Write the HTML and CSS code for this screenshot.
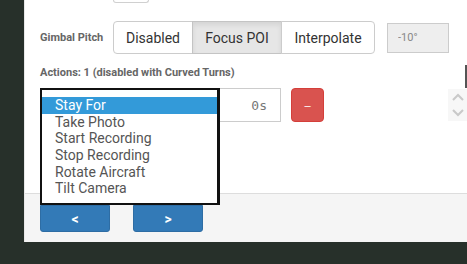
FILE: index.html
```html
<!DOCTYPE html>
<html lang="en">
<head>
    <meta charset="UTF-8">
    <title>Waypoint Settings</title>
    <link rel="stylesheet" href="styles.css">
</head>
<body>
    <div class="panel">
        <div class="content">
            <div class="prev-input"></div>

            <div class="form-row">
                <label class="field-label">Gimbal Pitch</label>
                <div class="btn-group">
                    <button class="seg">Disabled</button>
                    <button class="seg active">Focus POI</button>
                    <button class="seg">Interpolate</button>
                </div>
                <input class="pitch-input" type="text" value="-10°" disabled>
            </div>

            <div class="actions-row">
                <span class="field-label">Actions: 1 (disabled with Curved Turns)</span>
                <span class="edge-line"></span>
            </div>

            <div class="action-row">
                <div class="select-wrap">
                    <div class="select-closed"></div>
                    <ul class="listbox">
                        <li class="selected">Stay For</li>
                        <li>Take Photo</li>
                        <li>Start Recording</li>
                        <li>Stop Recording</li>
                        <li>Rotate Aircraft</li>
                        <li>Tilt Camera</li>
                    </ul>
                </div>
                <input class="time-input" type="text" value="0s">
                <button class="btn-remove">&ndash;</button>
                <div class="spinner">
                    <svg width="14" height="10" viewBox="0 0 14 10"><path d="M2 8 L7 3 L12 8" fill="none" stroke="#c9c9c9" stroke-width="2"/></svg>
                    <svg width="14" height="10" viewBox="0 0 14 10"><path d="M2 2 L7 7 L12 2" fill="none" stroke="#c9c9c9" stroke-width="2"/></svg>
                </div>
            </div>
        </div>

        <div class="footer">
            <button class="btn-nav">&lt;</button>
            <button class="btn-nav">&gt;</button>
        </div>
    </div>
</body>
</html>
```

FILE: styles.css
```css
body {
    margin: 0;
    padding: 0;
    background-color: #27302a;
    font-family: 'Roboto', 'Liberation Sans', sans-serif;
    width: 467px;
    height: 264px;
    overflow: hidden;
}
.panel {
    margin-left: 24px;
    width: 443px;
    background: #fff;
    border-left: 1px solid #e8e8e8;
    box-sizing: border-box;
}
.content {
    height: 193px;
    padding-left: 15px;
    box-sizing: border-box;
}
.prev-input {
    margin-left: 73px;
    width: 34px;
    height: 2px;
    border: 1px solid #d0d0d0;
    border-top: none;
    border-radius: 0 0 4px 4px;
}
.form-row {
    display: flex;
    align-items: center;
    margin-top: 18px;
    height: 33px;
}
.field-label {
    font-size: 11px;
    font-weight: bold;
    color: #666;
    line-height: 16px;
}
.form-row .field-label {
    width: 73px;
}
.btn-group {
    display: flex;
    height: 33px;
}
.seg {
    font-family: 'Roboto', 'Liberation Sans', sans-serif;
    font-size: 14px;
    color: #333;
    background: #fff;
    border: 1px solid #ccc;
    margin-left: -1px;
    padding: 0;
    height: 33px;
}
.seg:first-child {
    margin-left: 0;
    width: 80px;
    border-radius: 4px 0 0 4px;
}
.seg.active {
    width: 90px;
    background: #e6e6e6;
    border-color: #c4c4c4;
    box-shadow: inset 0 3px 5px rgba(0, 0, 0, 0.08);
}
.seg:last-child {
    width: 94px;
    border-radius: 0 4px 4px 0;
}
.pitch-input {
    margin-left: 12px;
    width: 62px;
    height: 30px;
    box-sizing: border-box;
    border: 1px solid #ccc;
    background: #eee;
    color: #888;
    font-family: 'Roboto', 'Liberation Sans', sans-serif;
    font-size: 11px;
    padding: 0 0 0 10px;
}
.actions-row {
    display: flex;
    margin-top: 11px;
    height: 23px;
}
.edge-line {
    margin-left: auto;
    width: 2px;
    height: 23px;
    background: #555;
}
.action-row {
    display: flex;
    height: 34px;
}
.select-wrap {
    position: relative;
    width: 180px;
    height: 34px;
}
.select-closed {
    height: 34px;
    border: 1px solid #ccc;
    border-radius: 4px 0 0 4px;
    box-sizing: border-box;
}
.listbox {
    position: absolute;
    top: 0;
    left: 0;
    z-index: 2;
    width: 180px;
    height: 117px;
    box-sizing: border-box;
    margin: 0;
    padding: 7px 0 6px 0;
    list-style: none;
    background: #fff;
    border: 2px solid #111;
    border-right-width: 3px;
}
.listbox li {
    font-size: 14px;
    line-height: 16.7px;
    height: 16.7px;
    color: #555;
    padding-left: 13px;
}
.listbox li.selected {
    background: #339ad9;
    color: #fff;
}
.time-input {
    width: 61px;
    height: 34px;
    box-sizing: border-box;
    border: 1px solid #ccc;
    border-left: none;
    text-align: right;
    padding: 0 13px 0 0;
    font-family: 'DejaVu Sans Mono', monospace;
    font-size: 13px;
    color: #777;
}
.btn-remove {
    margin-left: 10px;
    width: 33px;
    height: 34px;
    background: #d9534f;
    border: 1px solid #d43f3a;
    border-radius: 4px;
    color: #fff;
    font-size: 11px;
    padding: 0;
}
.spinner {
    margin-left: auto;
    width: 19px;
    height: 32px;
    margin-top: 1px;
    background: #f7f7f7;
    display: flex;
    flex-direction: column;
    align-items: center;
    justify-content: center;
    gap: 6px;
}
.spinner svg {
    display: block;
}
.footer {
    height: 49px;
    background: #f5f5f5;
    border-top: 1px solid #ddd;
    box-sizing: border-box;
    padding: 11px 0 0 15px;
    display: flex;
    gap: 23px;
}
.btn-nav {
    width: 70px;
    height: 27px;
    background: #337ab7;
    border: 1px solid #2e6da4;
    border-radius: 0 0 3px 3px;
    color: #fff;
    font-family: 'Roboto', 'Liberation Sans', sans-serif;
    font-weight: bold;
    font-size: 14px;
    padding: 0;
}
```
